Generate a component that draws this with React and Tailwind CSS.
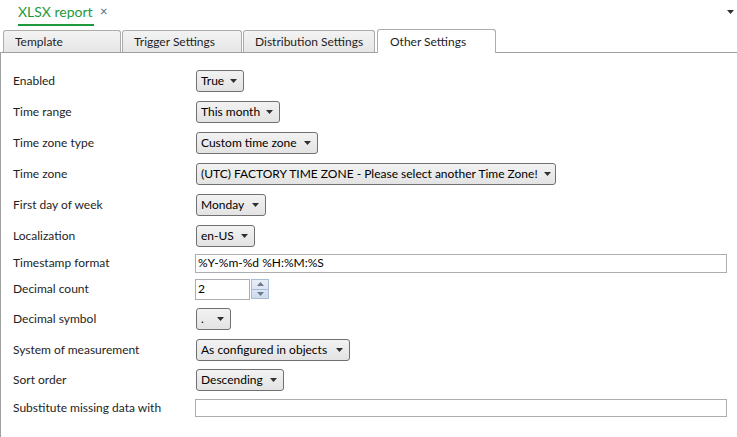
import React from "react";

const font = { fontFamily: '"Segoe UI", Lato, "Noto Sans", sans-serif' };

function Arrow() {
  return (
    <svg width="7" height="4" viewBox="0 0 7 4" className="shrink-0">
      <path d="M0 0h7L3.5 4z" fill="#303030" />
    </svg>
  );
}

function Dropdown({ value, w }) {
  return (
    <div
      className={`h-[22px] ${w} flex items-center justify-between gap-[6px] pl-[4px] pr-[6px] rounded-[3px] border border-[#707070] bg-gradient-to-b from-[#f2f2f2] to-[#e3e3e3] text-[12px] text-black`}
    >
      <span className="whitespace-nowrap">{value}</span>
      <Arrow />
    </div>
  );
}

function Row({ label, h, children }) {
  return (
    <div className={`flex items-center ${h}`}>
      <div className="w-[183px] shrink-0 text-[12px] text-[#1e1e1e]">{label}</div>
      {children}
    </div>
  );
}

function Spinner() {
  return (
    <div className="ml-px flex flex-col w-[18px] h-[20px] border border-[#a7bcd8] bg-gradient-to-b from-[#e8eef7] to-[#cfdced]">
      <div className="flex-1 flex items-center justify-center border-b border-[#a7bcd8]">
        <svg width="7" height="4" viewBox="0 0 7 4">
          <path d="M0 4h7L3.5 0z" fill="#6b7a8c" />
        </svg>
      </div>
      <div className="flex-1 flex items-center justify-center">
        <svg width="7" height="4" viewBox="0 0 7 4">
          <path d="M0 0h7L3.5 4z" fill="#6b7a8c" />
        </svg>
      </div>
    </div>
  );
}

const tabs = [
  { name: "Template", w: "w-[118px]", ml: "ml-[3px]" },
  { name: "Trigger Settings", w: "w-[120px]", ml: "ml-[1px]" },
  { name: "Distribution Settings", w: "w-[132px]", ml: "ml-[1px]" },
];

export default function App() {
  return (
    <div className="w-[737px] h-[437px] bg-white overflow-hidden" style={font}>
      {/* Document header */}
      <div className="h-[30px] flex items-start justify-between">
        <div className="flex items-center ml-[18px] mt-[2px]">
          <div className="flex flex-col">
            <span className="text-[14px] leading-[20px] text-[#1e9a3c]">XLSX report</span>
            <div className="h-[2px] w-[76px] bg-[#1e9a3c] mt-[2px]" />
          </div>
          <span className="ml-[6px] mb-[4px] text-[13px] text-[#4e6a86]">×</span>
        </div>
        <div className="mt-[10px] mr-[3px]">
          <Arrow />
        </div>
      </div>

      {/* Tabs */}
      <div className="flex items-end h-[23px] border-b border-[#a0a0a0]">
        {tabs.map((t) => (
          <div
            key={t.name}
            className={`${t.w} ${t.ml} h-[22px] flex items-center pl-[11px] border border-b-0 border-[#acacac] rounded-t-[3px] bg-gradient-to-b from-[#f3f3f3] to-[#e6e6e6] text-[12px] text-[#1e1e1e]`}
          >
            {t.name}
          </div>
        ))}
        <div className="w-[119px] ml-[2px] h-[24px] -mb-px flex items-center pl-[12px] border border-b-0 border-[#acacac] rounded-t-[3px] bg-white text-[12px] text-[#1e1e1e]">
          Other Settings
        </div>
      </div>

      {/* Settings panel */}
      <div className="border-l border-[#a0a0a0] h-[384px] pl-[12px] pt-[12px]">
        <Row label="Enabled" h="h-[31px]">
          <Dropdown value="True" w="w-[48px]" />
        </Row>
        <Row label="Time range" h="h-[31px]">
          <Dropdown value="This month" w="w-[84px]" />
        </Row>
        <Row label="Time zone type" h="h-[31px]">
          <Dropdown value="Custom time zone" w="w-[122px]" />
        </Row>
        <Row label="Time zone" h="h-[31px]">
          <Dropdown value="(UTC) FACTORY TIME ZONE - Please select another Time Zone!" w="w-[360px]" />
        </Row>
        <Row label="First day of week" h="h-[31px]">
          <Dropdown value="Monday" w="w-[70px]" />
        </Row>
        <Row label="Localization" h="h-[31px]">
          <Dropdown value="en-US" w="w-[59px]" />
        </Row>
        <Row label="Timestamp format" h="h-[24px]">
          <div className="h-[19px] w-[532px] -ml-px flex items-center pl-[2px] border border-[#abadb3] text-[12px] text-black">
            %Y-%m-%d %H:%M:%S
          </div>
        </Row>
        <Row label="Decimal count" h="h-[28px]">
          <div className="-ml-px flex items-center">
            <div className="h-[21px] w-[55px] flex items-center pl-[2px] border border-[#abadb3] text-[12px] text-black">
              2
            </div>
            <Spinner />
          </div>
        </Row>
        <Row label="Decimal symbol" h="h-[32px]">
          <Dropdown value="." w="w-[35px]" />
        </Row>
        <Row label="System of measurement" h="h-[30px]">
          <Dropdown value="As configured in objects" w="w-[154px]" />
        </Row>
        <Row label="Sort order" h="h-[30px]">
          <Dropdown value="Descending" w="w-[88px]" />
        </Row>
        <Row label="Substitute missing data with" h="h-[26px]">
          <div className="h-[18px] w-[532px] -ml-px border border-[#abadb3]" />
        </Row>
      </div>
    </div>
  );
}
